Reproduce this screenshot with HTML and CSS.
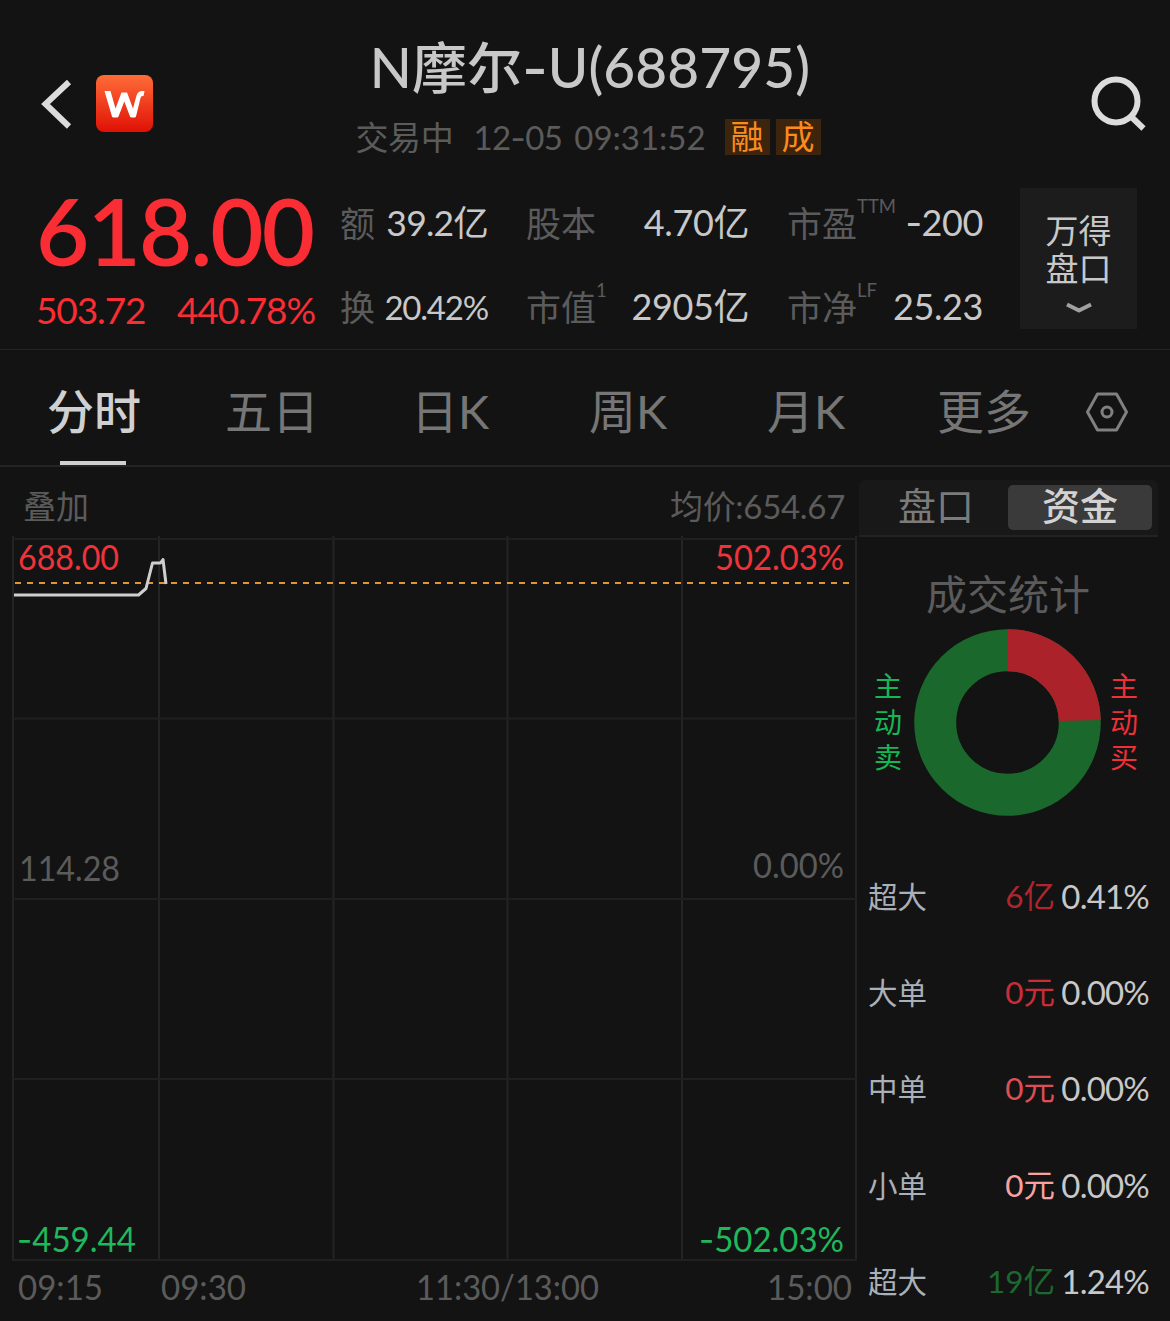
FILE: index.html
```html
<!DOCTYPE html>
<html lang="zh-CN">
<head>
<meta charset="utf-8">
<title>N摩尔-U(688795)</title>
<link rel="stylesheet" href="styles.css">
</head>
<body>
<div class="app">
  <header class="header">
    <div class="header-left">
      <svg class="back" viewBox="40 78 34 52"><path d="M69 82 45.500 104l23.500 22.500" fill="none" stroke="#dcdcdc" stroke-width="6"/></svg>
      <svg class="logo" viewBox="96 75 57 57">
        <defs><linearGradient id="lg" x1="0" y1="0" x2="0" y2="1"><stop offset="0" stop-color="#ff6d38"/><stop offset="1" stop-color="#e01005"/></linearGradient></defs>
        <rect x="96" y="75" width="57" height="57" rx="8" fill="url(#lg)"/>
        <path d="M104.500 91H110.500L115.500 108.500 121.500 92.500H127L133 108.500 136.500 95.500Q138 91 142 91H144.500L143.500 96H142.500Q141 96 140.500 98L136 116.500Q135.700 117.500 134.500 117.500H131.500Q130.300 117.500 130 116.500L124.300 101.500 118.500 116.500Q118.200 117.500 117 117.500H113.500Q112.300 117.500 112 116.500Z" fill="#fff"/>
      </svg>
    </div>
    <div class="heading">
      <h1 class="title">N摩尔<span class="dash">-</span>U(688795)</h1>
      <div class="status">
        <span class="state">交易中</span><span class="date">12<span class="dash">-</span>05</span><span class="time">09:31:52</span>
        <span class="tag">融</span><span class="tag">成</span>
      </div>
    </div>
    <svg class="search" viewBox="1088 74 60 60" fill="none" stroke="#dcdcdc" stroke-width="6"><circle cx="1116" cy="101" r="21.500"/><path d="M1131 116.500 1143.500 128.500"/></svg>
  </header>

  <section class="quote">
    <div class="price-col">
      <div class="price">618.00</div>
      <div class="change"><span>503.72</span><span>440.78%</span></div>
    </div>
    <div class="stats">
      <div class="stat"><span class="label">额</span><span class="value narrow">39.2亿</span></div>
      <div class="stat"><span class="label">股本</span><span class="value">4.70亿</span></div>
      <div class="stat"><span class="label">市盈<sup>TTM</sup></span><span class="value"><span class="dash">-</span>200</span></div>
      <div class="stat"><span class="label">换</span><span class="value small">20.42%</span></div>
      <div class="stat"><span class="label">市值<sup>1</sup></span><span class="value">2905亿</span></div>
      <div class="stat"><span class="label">市净<sup>LF</sup></span><span class="value">25.23</span></div>
    </div>
    <div class="depth">
      <span>万得</span><span>盘口</span>
      <svg viewBox="0 0 28 14"><path d="M2 3.500 14 9.500 26 3.500" fill="none" stroke="#a0a0a0" stroke-width="4" stroke-linejoin="round"/></svg>
    </div>
  </section>

  <nav class="tabs">
    <span class="tab active">分时</span>
    <span class="tab">五日</span>
    <span class="tab">日K</span>
    <span class="tab">周K</span>
    <span class="tab">月K</span>
    <span class="tab">更多</span>
    <svg class="gear" viewBox="0 0 44 40" fill="none" stroke="#808080" stroke-width="3"><path d="M12.500 2H31.500L41.500 20 31.500 38H12.500L2.500 20Z" stroke-linejoin="round"/><circle cx="22" cy="20" r="5"/></svg>
  </nav>

  <main class="main">
    <section class="chart">
      <div class="chart-top"><span class="overlay">叠加</span><span class="avg">均价:654.67</span></div>
      <svg class="plot" viewBox="0 536 857 785">
        <g stroke="#242424" stroke-width="2">
          <path d="M13 536V1261M159 536V1261M333.500 536V1261M507.500 536V1261M682 536V1261M856 536V1261"/>
          <path d="M13 539H857M13 718.500H857M13 899H857M13 1079H857M13 1260H857" stroke="#202020"/>
        </g>
        <path d="M15 583H850" stroke="#e69535" stroke-width="2" stroke-dasharray="6 6"/>
        <path d="M14 595H138.500L146 588.500 152.500 563H160.500L163 559.500 166 584" fill="none" stroke="#cfcfcf" stroke-width="3" stroke-linejoin="round"/>
        <g class="axis">
          <text class="up" x="18" y="570" textLength="101" lengthAdjust="spacingAndGlyphs">688.00</text>
          <text class="up" x="715" y="570" textLength="129" lengthAdjust="spacingAndGlyphs">502.03%</text>
          <text x="19" y="881" textLength="101" lengthAdjust="spacingAndGlyphs">114.28</text>
          <text x="753" y="877.500" textLength="91" lengthAdjust="spacingAndGlyphs">0.00%</text>
          <text class="down" x="17" y="1252" textLength="119" lengthAdjust="spacingAndGlyphs"><tspan class="dash">-</tspan>459.44</text>
          <text class="down" x="699" y="1252" textLength="145" lengthAdjust="spacingAndGlyphs"><tspan class="dash">-</tspan>502.03%</text>
          <text x="18" y="1300" textLength="85" lengthAdjust="spacingAndGlyphs">09:15</text>
          <text x="161" y="1300" textLength="85" lengthAdjust="spacingAndGlyphs">09:30</text>
          <text x="416" y="1300" textLength="183" lengthAdjust="spacingAndGlyphs">11:30/13:00</text>
          <text x="767" y="1300" textLength="85" lengthAdjust="spacingAndGlyphs">15:00</text>
        </g>
      </svg>
    </section>

    <aside class="side">
      <div class="segment"><span class="seg">盘口</span><span class="seg on">资金</span></div>
      <h2 class="side-title">成交统计</h2>
      <div class="donut-row">
        <span class="vlabel sell">主动卖</span>
        <svg class="donut" viewBox="-93.500 -93.500 187 187" fill="none" stroke-width="42">
          <circle r="72.300" stroke="#1b682c"/>
          <path d="M0 -72.300A72.300 72.300 0 0 1 72.270 -2" stroke="#ac222a"/>
        </svg>
        <span class="vlabel buy">主动买</span>
      </div>
      <div class="flows">
        <div class="flow"><span class="kind">超大</span><span class="amt r1">6亿</span><span class="pct">0.41%</span></div>
        <div class="flow"><span class="kind">大单</span><span class="amt r2">0元</span><span class="pct">0.00%</span></div>
        <div class="flow"><span class="kind">中单</span><span class="amt r3">0元</span><span class="pct">0.00%</span></div>
        <div class="flow"><span class="kind">小单</span><span class="amt r4">0元</span><span class="pct">0.00%</span></div>
        <div class="flow"><span class="kind">超大</span><span class="amt g1">19亿</span><span class="pct">1.24%</span></div>
      </div>
    </aside>
  </main>
</div>
</body>
</html>
```
FILE: styles.css
```css
* { box-sizing: border-box; }
body {
  margin: 0;
  background: #131313;
  color: #c8c8c8;
  font-family: Lato, "Noto Sans CJK SC", sans-serif;
  font-kerning: none;
}
svg { display: block; }
.app { width: 1170px; height: 1321px; overflow: hidden; white-space: nowrap; }
.dash { font-family: Inter, sans-serif; line-height: 0; }

.header { display: grid; grid-template-columns: 340px 500px 1fr; height: 175px; }
.header-left { display: flex; align-items: flex-start; gap: 22px; height: 175px; padding: 75px 0 0 40px; }
.back { width: 34px; height: 52px; margin-top: 3px; }
.logo { width: 57px; height: 57px; }
.heading { display: flex; flex-direction: column; align-items: center; padding-top: 34px; }
.title { margin: 0; font-size: 55px; line-height: 67px; font-weight: 500; letter-spacing: 0.1px; }
.status { display: flex; align-items: center; height: 36px; margin-top: 18px; margin-right: 4px; font-size: 33px; line-height: 35px; color: #5b5b5b; }
.state { margin-right: 20px; letter-spacing: -0.3px; }
.date { margin-right: 12px; letter-spacing: -0.6px; }
.time { margin-right: 19px; }
.tag { width: 45px; height: 36px; background: #3d240c; color: #fb8b1c; text-align: center; margin-right: 6px; }
.tag:last-child { margin-right: 0; }
.search { width: 60px; height: 60px; margin: 74px 0 0 248px; }

.quote { display: flex; height: 175px; border-bottom: 1px solid #242424; }
.price-col { width: 340px; padding-left: 36px; color: #f92d33; }
.price { height: 110px; line-height: 111px; font-size: 92px; font-weight: 600; letter-spacing: -1.9px; }
.change { display: flex; justify-content: space-between; width: 279px; height: 50px; line-height: 49px; font-size: 37px; letter-spacing: -1.1px; }
.stats { display: grid; grid-template-columns: 148px 223px 196px; column-gap: 38px; grid-template-rows: 84px 84px; width: 680px; padding-top: 6px; }
.stat { display: flex; justify-content: space-between; height: 84px; line-height: 84px; font-size: 35px; }
.label { color: #5b5b5b; }
.label sup { font-size: 18.5px; line-height: 0; vertical-align: 24px; }
.value { font-size: 36px; letter-spacing: -0.4px; line-height: 83px; }
.narrow { font-size: 35.5px; letter-spacing: -0.8px; }
.small { font-size: 33px; line-height: 84px; letter-spacing: -1.2px; }
.depth { display: flex; flex-direction: column; align-items: center; width: 117px; height: 141px; margin-top: 13px; padding-top: 23px; background: #1c1c1c; font-size: 33px; line-height: 38px; }
.depth svg { width: 28px; height: 14px; margin-top: 14px; }

.tabs { display: grid; grid-template-columns: repeat(6, 178px) 1fr; height: 117px; padding-left: 5px; border-bottom: 2px solid #242424; }
.tab { display: flex; flex-direction: column; align-items: center; padding-top: 12px; font-size: 47px; line-height: 99px; height: 115px; color: #767676; }
.active { color: #d0d0d0; font-weight: 500; }
.active::after { content: ""; width: 66px; height: 4px; margin-right: 2px; background: #d0d0d0; }
.gear { width: 44px; height: 40px; margin: 42px 0 0 12px; }

.main { display: grid; grid-template-columns: 857px 313px; height: 854px; }
.chart-top { display: flex; justify-content: space-between; height: 69px; padding: 0 12px 0 23px; font-size: 33px; line-height: 78px; color: #5b5b5b; }
.avg { letter-spacing: -0.3px; }
.plot { width: 857px; height: 785px; }
.axis { font-size: 34.500px; fill: #5b5b5b; }
.up { fill: #f0333a; }
.down { fill: #1fb85b; }

.side { padding-left: 2px; }
.segment { display: flex; align-items: flex-start; justify-content: space-between; width: 299px; height: 57px; margin-top: 13px; padding: 5px 6px 0 5px; background: #181818; border-bottom: 2px solid #222; border-radius: 6px 6px 0 0; font-size: 38px; }
.seg { width: 144px; height: 45px; line-height: 41px; text-align: center; color: #7b7b7b; border-radius: 5px; }
.on { background: #3a3a3a; color: #d2d2d2; font-weight: 500; }
.side-title { margin: 30px 0 0; width: 298px; height: 56px; line-height: 56px; text-align: center; font-size: 41px; font-weight: 400; color: #5b5b5b; }
.donut-row { display: flex; align-items: center; gap: 12px; height: 187px; padding-left: 15px; margin-top: 6px; }
.donut { width: 187px; height: 187px; }
.vlabel { width: 28px; font-size: 28px; line-height: 35.500px; white-space: normal; }
.sell { color: #17b655; }
.buy { color: #f03036; margin-left: -3px; }
.flows { padding: 33px 0 0 9px; }
.flow { display: grid; grid-template-columns: 70px 117px 94px; height: 96.200px; line-height: 96px; font-size: 29.500px; }
.kind { color: #a9b0b8; }
.amt { text-align: right; font-size: 31.5px; letter-spacing: 0; line-height: 94px; }
.pct { text-align: right; font-size: 33px; letter-spacing: -0.8px; line-height: 94px; }
.r1 { color: #ae252e; }
.r2 { color: #c92e38; }
.r3 { color: #dd4e55; }
.r4 { color: #f7a1a0; }
.g1 { color: #1b692e; }
```
